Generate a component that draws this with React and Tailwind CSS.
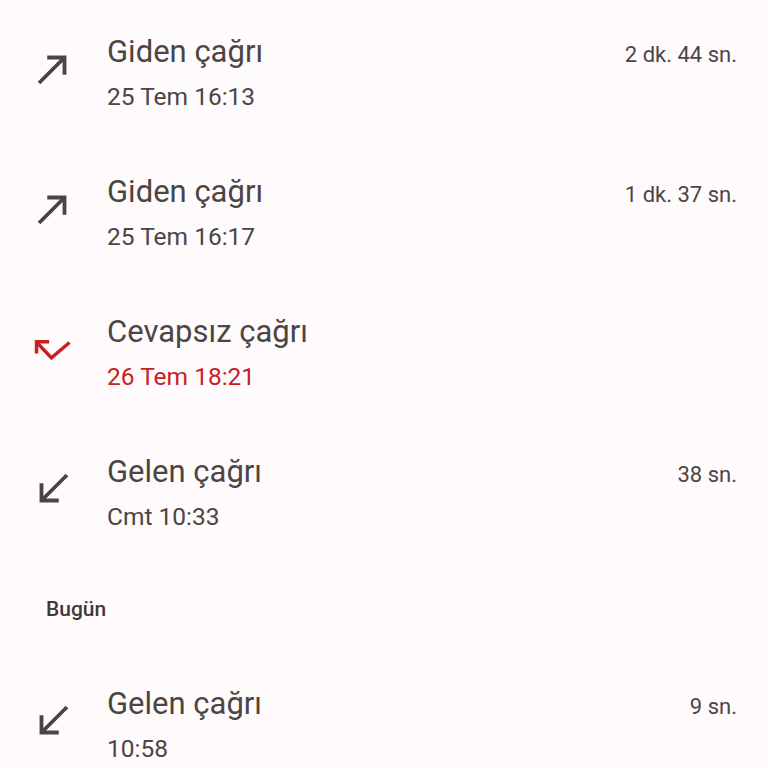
import React from 'react';

const icons = {
  out: 'M9 5v2h6.59L4 18.59 5.41 20 17 8.41V15h2V5z',
  in: 'M20 5.41L18.59 4 7 15.59V9H5v10h10v-2H8.41z',
};

const calls = [
  { type: 'out', title: 'Giden çağrı', time: '25 Tem 16:13', duration: '2 dk. 44 sn.' },
  { type: 'out', title: 'Giden çağrı', time: '25 Tem 16:17', duration: '1 dk. 37 sn.' },
  { type: 'missed', title: 'Cevapsız çağrı', time: '26 Tem 18:21', duration: '' },
  { type: 'in', title: 'Gelen çağrı', time: 'Cmt 10:33', duration: '38 sn.' },
];

const today = [{ type: 'in', title: 'Gelen çağrı', time: '10:58', duration: '9 sn.' }];

const CallIcon = ({ type }) => {
  if (type === 'missed') {
    return (
      <svg viewBox="0 0 24 24" className="w-[46px] h-[46px] mt-[14px] shrink-0" fill="none" stroke="#c5221f" strokeWidth="1.8">
        <path d="M3.6 8.6L11.2 16.6L20.6 8.6" />
        <path d="M10 8.2H3.4V14.4" />
      </svg>
    );
  }
  return (
    <svg viewBox="0 0 24 24" className="w-[46px] h-[46px] mt-[14px] shrink-0 fill-[#4b4544]">
      <path d={icons[type]} />
    </svg>
  );
};

const CallRow = ({ call }) => {
  const missed = call.type === 'missed';
  return (
    <div className="flex items-start h-[140px] pt-[32px] pl-[30px] pr-[31px]">
      <CallIcon type={call.type} />
      <div className="ml-[31px] flex-1">
        <div className="flex items-baseline justify-between">
          <span className="text-[31px] leading-[40px] text-[#4b4544]">{call.title}</span>
          <span className="text-[22px] text-[#4b4544]">{call.duration}</span>
        </div>
        <div className={`mt-[7px] text-[24.5px] leading-[36px] ${missed ? 'text-[#c5221f]' : 'text-[#4b4544]'}`}>
          {call.time}
        </div>
      </div>
    </div>
  );
};

const App = () => {
  return (
    <div
      className="w-[768px] h-[768px] overflow-hidden bg-[#fffbfd]"
      style={{ fontFamily: 'Roboto, "Noto Sans", sans-serif' }}
    >
      {calls.map((c, i) => (
        <CallRow key={i} call={c} />
      ))}
      <div className="pt-[37px] pb-[31px] pl-[46px] text-[21px] leading-[24px] font-medium text-[#3f3a39]">
        Bugün
      </div>
      {today.map((c, i) => (
        <CallRow key={i} call={c} />
      ))}
    </div>
  );
};

export default App;
